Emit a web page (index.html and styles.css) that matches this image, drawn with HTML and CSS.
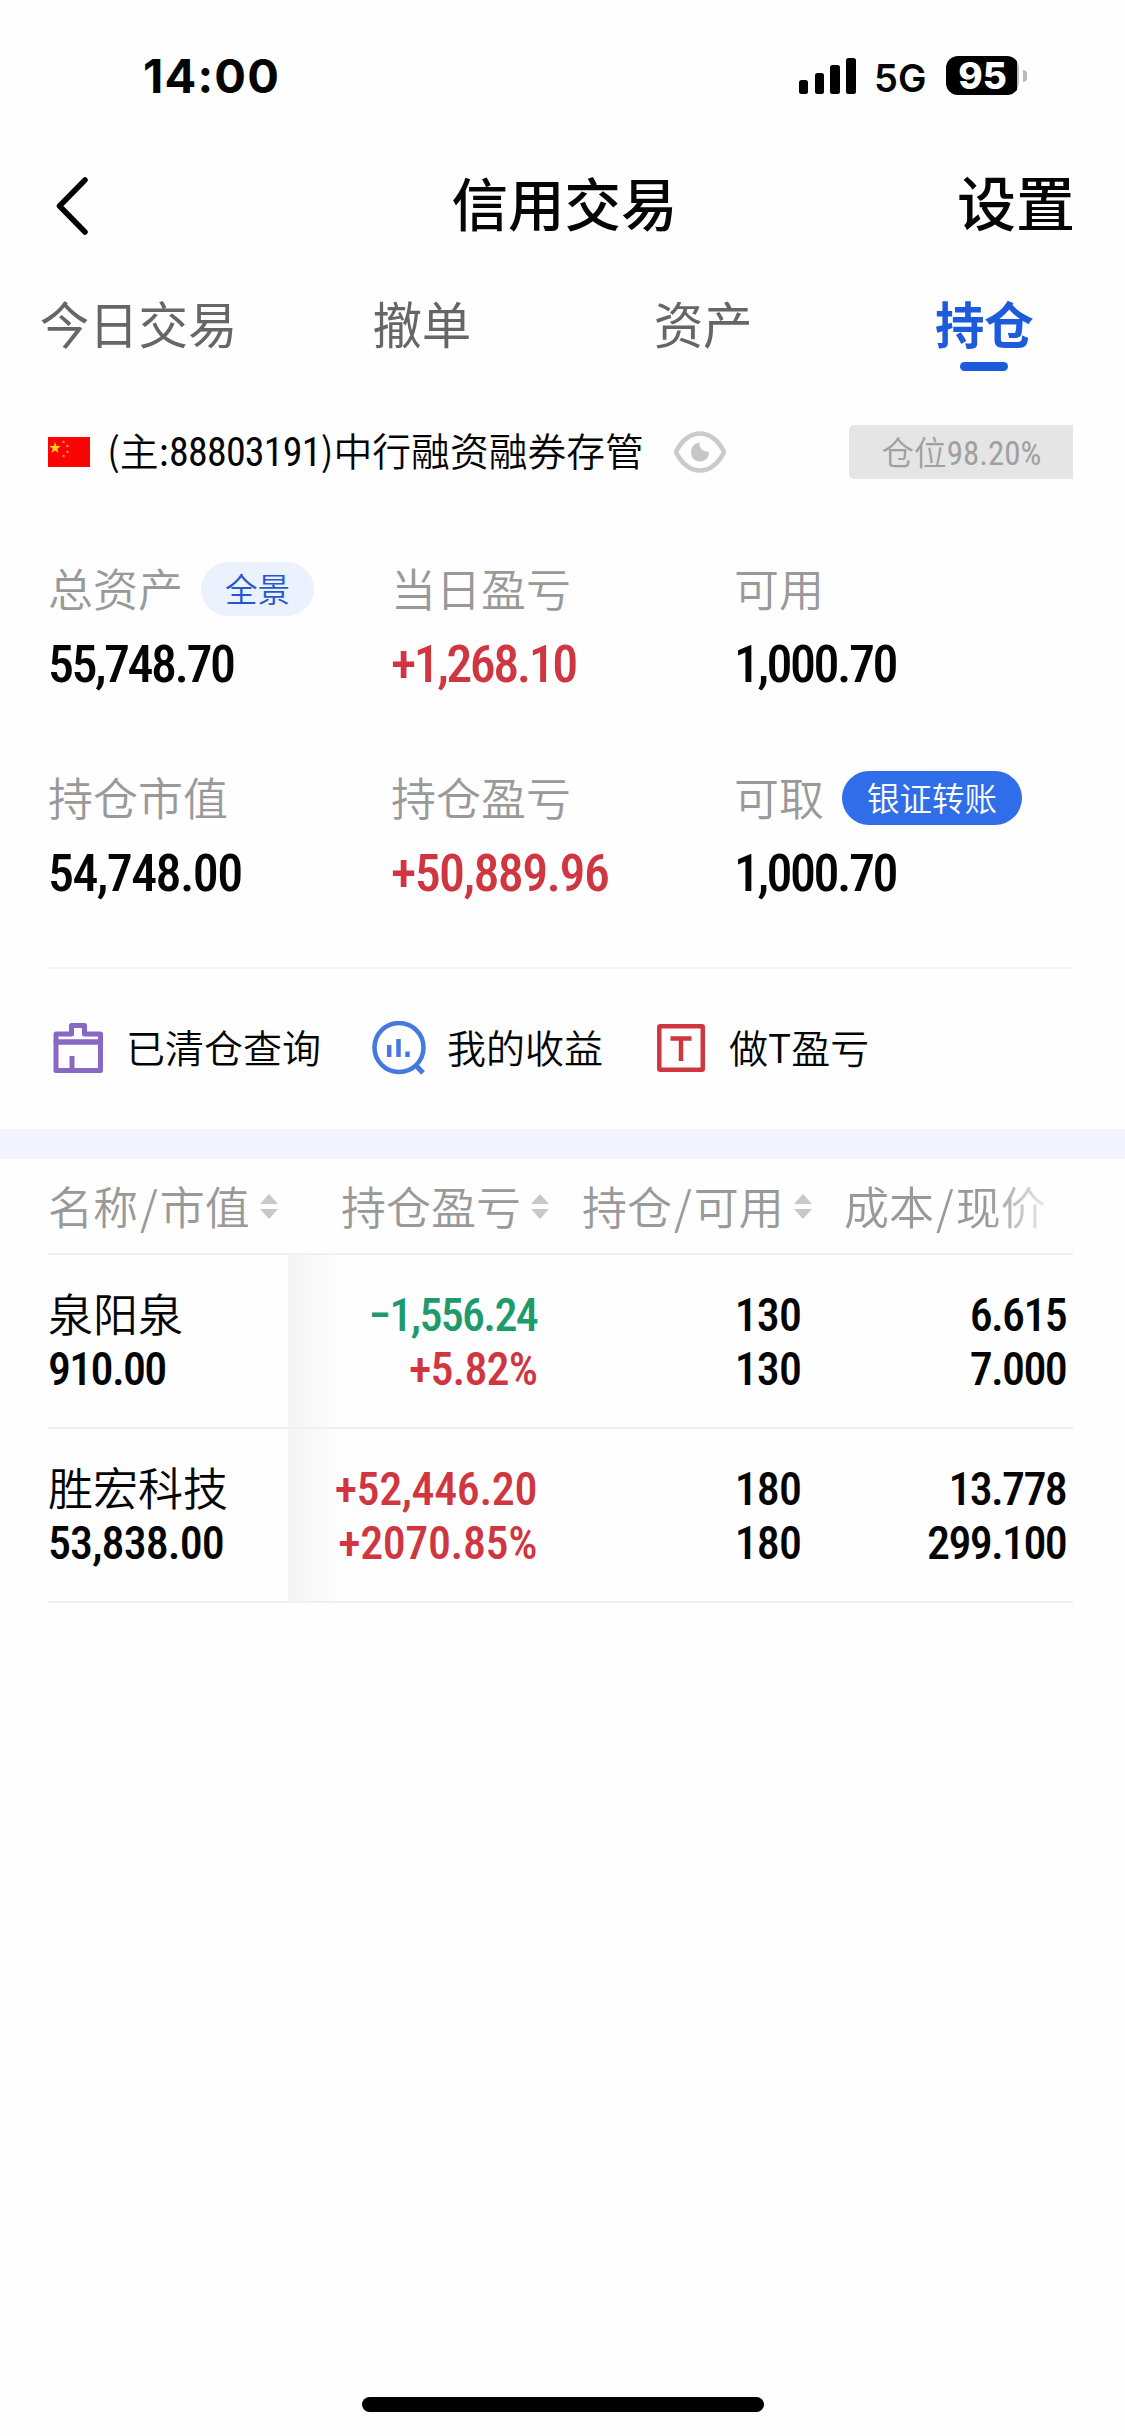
FILE: index.html
```html
<!DOCTYPE html>
<html lang="zh-CN">
<head>
    <meta charset="UTF-8">
    <meta name="viewport" content="width=device-width, initial-scale=1.0">
    <title>信用交易</title>
    <link rel="stylesheet" href="styles.css">
</head>
<body>

<div class="status-bar">
    <span class="time">14:00</span>
    <div class="status-right">
        <svg class="signal" viewBox="0 0 58 36" width="58" height="36">
            <rect x="0" y="22" width="9" height="14" rx="2.5"/>
            <rect x="16" y="15" width="9" height="21" rx="2.5"/>
            <rect x="31" y="7" width="10" height="29" rx="2.5"/>
            <rect x="47" y="0" width="10" height="36" rx="2.5"/>
        </svg>
        <span class="network">5G</span>
        <span class="battery">95</span>
        <span class="battery-cap"></span>
    </div>
</div>

<header class="nav-bar">
    <svg class="back" viewBox="0 0 36 60" width="36" height="60">
        <path d="M31 4L5.500 30L31 56"/>
    </svg>
    <h1>信用交易</h1>
    <a class="settings">设置</a>
</header>

<nav class="tabs">
    <a class="tab first">今日交易</a>
    <a class="tab">撤单</a>
    <a class="tab">资产</a>
    <a class="tab active">持仓</a>
</nav>

<section class="account">
    <svg class="flag" viewBox="0 0 42 30" width="42" height="30">
        <rect width="42" height="30" fill="#fa0505"/>
        <path fill="#ffd21a" d="M7 5l1.400 4 4.300.1-3.400 2.600 1.200 4.100L7 13.400l-3.500 2.400 1.200-4.100L1.300 9.100l4.300-.1z"/>
        <g fill="#f8863a">
            <circle cx="15.500" cy="5" r="1.300"/>
            <circle cx="19.500" cy="9" r="1.300"/>
            <circle cx="19.500" cy="15" r="1.300"/>
            <circle cx="15.500" cy="19" r="1.300"/>
        </g>
    </svg>
    <span class="account-name">(主:<span class="account-no">88803191</span>)中行融资融券存管</span>
    <svg class="eye" viewBox="0 0 54 42" width="54" height="42">
        <path d="M3 21C8 10 17 2.500 27 2.500S46 10 51 21C46 32 37 39.500 27 39.500S8 32 3 21z" fill="none" stroke="#cbcbcb" stroke-width="4.500" stroke-linejoin="round"/>
        <path d="M26.500 11.500c-.5 5.500 3 9.500 9.300 9.200C36.500 26 32.500 30.500 27 30.500c-5 0-9-4-9-9.300 0-5 3.500-9 8.500-9.700z" fill="#c6c6c6"/>
    </svg>
    <span class="position">仓位<span class="position-num">98.20%</span></span>
</section>

<section class="stats">
    <div class="stat">
        <div class="label">总资产<a class="pill">全景</a></div>
        <div class="value tight">55,748.70</div>
    </div>
    <div class="stat">
        <div class="label">当日盈亏</div>
        <div class="value tight red">+1,268.10</div>
    </div>
    <div class="stat">
        <div class="label">可用</div>
        <div class="value tight">1,000.70</div>
    </div>
    <div class="stat">
        <div class="label">持仓市值</div>
        <div class="value">54,748.00</div>
    </div>
    <div class="stat">
        <div class="label">持仓盈亏</div>
        <div class="value red">+50,889.96</div>
    </div>
    <div class="stat">
        <div class="label">可取<a class="pill solid">银证转账</a></div>
        <div class="value tight">1,000.70</div>
    </div>
</section>

<section class="actions">
    <a class="action">
        <svg viewBox="0 0 54 54" width="54" height="54" fill="none" stroke="#8768c4" stroke-width="5" stroke-linejoin="round">
            <path d="M5 21V13H20.500V4.500H33.500V13H49.500V21z"/>
            <path d="M5 21H49.500V49.500H5z"/>
            <path d="M21 35V49"/>
        </svg>
        <span>已清仓查询</span>
    </a>
    <a class="action">
        <svg viewBox="0 0 54 54" width="54" height="54" fill="none" stroke="#4678e0" stroke-width="4.500">
            <circle cx="27" cy="26.500" r="24.500"/>
            <path d="M44 44.500L51 52" stroke-width="5"/>
            <path d="M17.200 24V36M26.500 18V36M35.500 30.500V36"/>
        </svg>
        <span>我的收益</span>
    </a>
    <a class="action">
        <svg viewBox="0 0 54 54" width="54" height="54" fill="none" stroke="#d0363f" stroke-width="4.500" stroke-linejoin="round">
            <rect x="5.300" y="5.300" width="43.500" height="43.500" rx="1"/>
            <path d="M16.500 17.500H37.500M27 17.500V40"/>
        </svg>
        <span>做T盈亏</span>
    </a>
</section>

<section class="holdings">
    <div class="table-head">
        <span class="th">名称<em>/</em>市值<i class="sort"></i></span>
        <span class="th">持仓盈亏<i class="sort"></i></span>
        <span class="th">持仓<em>/</em>可用<i class="sort"></i></span>
        <span class="th fade">成本<em>/</em>现价</span>
    </div>
    <div class="row">
        <div class="cell name"><b>泉阳泉</b><span class="tight">910.00</span></div>
        <div class="cell shade"><span class="green tight">−1,556.24</span><span class="red">+5.82%</span></div>
        <div class="cell"><span>130</span><span>130</span></div>
        <div class="cell"><span class="tight">6.615</span><span class="tight">7.000</span></div>
    </div>
    <div class="row">
        <div class="cell name"><b>胜宏科技</b><span>53,838.00</span></div>
        <div class="cell shade"><span class="red wide">+52,446.20</span><span class="red wide">+2070.85%</span></div>
        <div class="cell"><span>180</span><span>180</span></div>
        <div class="cell"><span class="tight">13.778</span><span class="tight">299.100</span></div>
    </div>
</section>

<div class="home-indicator"></div>

</body>
</html>
```
FILE: styles.css
```css
:root {
    --bg-color: #fefefe;
    --text-color: #050505;
    --label-color: #999999;
    --blue: #1b5bdc;
    --red: #d0363f;
    --green: #1f9a6c;
    --line-color: #f0f0f0;
    --font-cjk: "Noto Sans CJK SC", sans-serif;
    --font-num: Roboto, "Noto Sans CJK SC", sans-serif;
}

*, *::before, *::after {
    box-sizing: border-box;
    margin: 0;
    padding: 0;
}

body {
    display: flex;
    flex-direction: column;
    width: 1125px;
    height: 2436px;
    overflow: hidden;
    background: var(--bg-color);
    color: var(--text-color);
    font-family: var(--font-cjk);
    font-weight: 350;
    white-space: nowrap;
}

svg {
    display: block;
    flex: none;
}

/* status bar */
.status-bar {
    display: flex;
    justify-content: space-between;
    align-items: center;
    height: 118px;
    padding: 34px 98px 0 143px;
    font-family: Inter, sans-serif;
}

.time {
    font-size: 47px;
    font-weight: 700;
    line-height: 84px;
    letter-spacing: 1.2px;
}

.status-right {
    display: flex;
    align-items: center;
    margin-top: -1px;
}

.network {
    width: 71px;
    padding-left: 17px;
    font-size: 38px;
    font-weight: 600;
    line-height: 40px;
    margin-top: 4px;
}

.battery {
    width: 73px;
    height: 39px;
    margin-left: 18px;
    border-radius: 12px;
    background: linear-gradient(to right, #000 71px, #bbb 71px);
    color: #fff;
    font-size: 37px;
    font-weight: 800;
    line-height: 39px;
    text-align: center;
}

.battery-cap {
    width: 4px;
    height: 12px;
    margin-left: 4px;
    border-radius: 0 6px 6px 0;
    background: #b8b8b8;
}

/* navigation */
.nav-bar {
    display: grid;
    grid-template-columns: 1fr auto 1fr;
    align-items: center;
    height: 165px;
    padding: 0 50px 0 54px;
}

.back {
    margin-top: 10px;
    fill: none;
    stroke: #000;
    stroke-width: 5.5;
    stroke-linecap: round;
    stroke-linejoin: round;
}

.nav-bar h1 {
    font-size: 56.5px;
    font-weight: 500;
    line-height: 80px;
}

.settings {
    justify-self: end;
    font-size: 59px;
    font-weight: 500;
    line-height: 80px;
}

.tabs {
    display: grid;
    grid-template-columns: repeat(4, 281.25px);
    height: 100px;
}

.tab {
    padding-top: 1px;
    color: #666;
    font-size: 49.5px;
    font-weight: 400;
    line-height: 78px;
    text-align: center;
}

.tab.first {
    padding-right: 4px;
}

.tab.active {
    color: var(--blue);
    font-weight: 700;
}

.tab.active::after {
    content: "";
    display: block;
    width: 48px;
    height: 9px;
    margin: 0 auto;
    border-radius: 5px;
    background: var(--blue);
}

/* account */
.account {
    display: flex;
    align-items: center;
    height: 138px;
    padding: 0 52px 0 48px;
}

.account-name {
    margin-left: 17px;
    padding-bottom: 2px;
    font-size: 38.8px;
    line-height: 54px;
}

.account-no {
    font-family: var(--font-num);
    font-size: 40px;
    font-stretch: 75%;
    font-weight: 400;
    letter-spacing: -0.8px;
}

.eye {
    margin-left: 29px;
}

.position {
    width: 224px;
    height: 54px;
    margin-left: auto;
    padding-left: 1px;
    border-radius: 5px 0 0 5px;
    background: #e5e5e5;
    color: #a0a0a0;
    font-size: 32.5px;
    line-height: 51px;
    text-align: center;
}

.position-num {
    font-family: var(--font-num);
    font-size: 33px;
    font-stretch: 75%;
    font-weight: 400;
}

/* asset summary */
.stats {
    display: grid;
    grid-template-columns: repeat(3, 343px);
    row-gap: 59px;
    margin: 0 52px 0 48px;
    padding: 41px 0 46px;
    border-bottom: 2px solid #f4f4f4;
}

.label {
    display: flex;
    height: 54px;
    color: var(--label-color);
    font-size: 45px;
    line-height: 52px;
}

.value {
    font-family: var(--font-num);
    font-size: 52px;
    font-stretch: 75%;
    font-weight: 500;
    letter-spacing: -1.6px;
    line-height: 98px;
    height: 96px;
}

.value.tight {
    letter-spacing: -2.5px;
}

.pill {
    height: 54px;
    margin-left: 18px;
    padding: 0 24px;
    border-radius: 27px;
    background: #ebf1fd;
    color: #2458cc;
    font-size: 32.5px;
    line-height: 51px;
}

.pill.solid {
    padding: 0 25px;
    background: #2f6ee8;
    color: #fff;
}

.red {
    color: var(--red);
}

.green {
    color: var(--green);
}

/* shortcuts */
.actions {
    display: flex;
    height: 160px;
    padding-left: 51px;
}

.action {
    display: flex;
    align-items: center;
    font-size: 39px;
    padding-bottom: 2px;
}

.action span {
    margin-left: 21px;
    padding-bottom: 5px;
}

.action + .action {
    margin-left: 51px;
}

/* holdings table */
.holdings {
    border-top: 30px solid #f2f5fd;
}

.table-head {
    display: grid;
    grid-template-columns: 293px 241px 262px 1fr;
    height: 96px;
    margin: 0 52px 0 48px;
    border-bottom: 2px solid var(--line-color);
    color: var(--label-color);
    font-size: 45px;
    line-height: 92px;
}

.th {
    display: flex;
    align-items: center;
}

.th em {
    padding: 0 2px;
    font-style: normal;
}

.th.fade {
    mask-image: linear-gradient(to right, #000 145px, transparent 215px);
}

.sort {
    display: flex;
    flex-direction: column;
    gap: 5px;
    margin-left: 10px;
}

.sort::before, .sort::after {
    content: "";
    border: 9px solid transparent;
}

.sort::before {
    border-top: 0;
    border-bottom: 10px solid #c8c8c8;
}

.sort::after {
    border-bottom: 0;
    border-top: 10px solid #c8c8c8;
}

.row {
    display: grid;
    grid-template-columns: 240px 249px 264px 1fr;
    height: 174px;
    margin: 0 52px 0 48px;
    padding: 2px 7px 0 0;
    border-bottom: 2px solid var(--line-color);
}

.cell {
    display: flex;
    flex-direction: column;
    justify-content: center;
    align-items: flex-end;
    font-family: var(--font-num);
    font-size: 46px;
    font-stretch: 75%;
    font-weight: 500;
    letter-spacing: -0.9px;
    line-height: 54px;
}

.cell.name {
    align-items: flex-start;
}

.cell b {
    font-family: var(--font-cjk);
    font-size: 45px;
    font-weight: 350;
    letter-spacing: 0;
    height: 54px;
    line-height: 50px;
}

.cell.shade {
    margin-top: -2px;
    padding-top: 2px;
    background: linear-gradient(to right, #f4f4f4, transparent 54px);
}

.cell .tight {
    letter-spacing: -1.7px;
}

.cell .wide {
    letter-spacing: -0.4px;
}

.home-indicator {
    width: 402px;
    height: 15px;
    margin: auto auto 24px;
    border-radius: 8px;
    background: #000;
}
```
